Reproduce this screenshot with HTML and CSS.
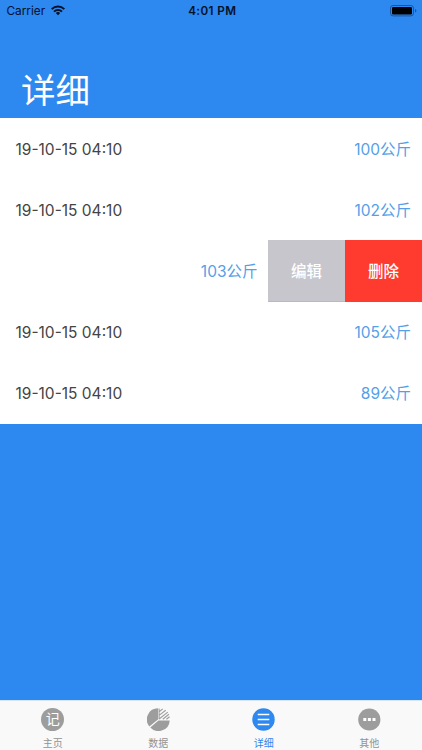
FILE: index.html
```html
<!DOCTYPE html>
<html lang="zh-CN">
<head>
<meta charset="utf-8">
<title>详细</title>
<link rel="stylesheet" href="styles.css">
</head>
<body>
<div class="app">
  <header class="header">
    <div class="status">
      <div class="carrier"><span>Carrier</span>
        <svg class="wifi" width="14" height="10.5" viewBox="0 0 14 10.5"><g fill="none" stroke="#04112b" stroke-width="2"><path d="M.7 4.1a9 9 0 0 1 12.6 0"/><path d="M3 6.6a5.7 5.7 0 0 1 8 0"/></g><path fill="#04112b" d="M4.8 8.1a3.2 3.2 0 0 1 4.4 0L7 10.3z"/></svg>
      </div>
      <div class="time">4:01 PM</div>
      <svg class="battery" width="27" height="12" viewBox="0 0 27 12"><rect x=".5" y=".5" width="23" height="10.4" rx="2.6" fill="none" stroke="#1a559d"/><rect x="2" y="2" width="20" height="7.4" rx="1.2"/><path d="M25 4v3.6q1.4-.5 1.4-1.8T25 4z" fill="#1a559d"/></svg>
    </div>
    <h1 class="title">详细</h1>
  </header>
  <main class="list">
    <div class="row"><span class="date">19-10-15 04:10</span><span class="weight">100公斤</span></div>
    <div class="row"><span class="date">19-10-15 04:10</span><span class="weight">102公斤</span></div>
    <div class="row swiped"><span class="weight">103公斤</span><button class="action edit">编辑</button><button class="action delete">删除</button></div>
    <div class="row"><span class="date">19-10-15 04:10</span><span class="weight">105公斤</span></div>
    <div class="row"><span class="date">19-10-15 04:10</span><span class="weight">89公斤</span></div>
  </main>
  <nav class="tabs">
    <a class="tab"><span class="note">记</span><span class="label">主页</span></a>
    <a class="tab"><svg class="icon" viewBox="0 0 23 23"><path fill="#9d9d9d" d="M11 .3v11.2L2.3 18.5A11.2 11.2 0 0 1 11 .3zM11.5 12.4H22.7A11.2 11.2 0 0 1 3.3 19.4z"/><path fill="none" stroke="#9d9d9d" stroke-width="1.1" d="M12.1 3.8l3.7-2.9M12.1 7.4l6.6-5.2M12.1 11l8.7-6.9M15.8 11.2l6.1-4.9M19.4 11.2l3.2-2.5M12.1 .6v10.6"/></svg><span class="label">数据</span></a>
    <a class="tab active"><svg class="icon" viewBox="0 0 23 23"><circle cx="11.5" cy="11.5" r="11.2" fill="#2d88ef"/><path d="M5.7 6.5h11.6M5.7 11.5h11.6M5.7 16.5h11.6" stroke="#fff" stroke-width="1.3"/></svg><span class="label">详细</span></a>
    <a class="tab"><svg class="icon" viewBox="0 0 23 23"><circle cx="11.3" cy="11.5" r="11.1" fill="#9d9d9d"/><path fill="#fff" d="M5.3 10h3v3h-3zM9.9 10h3v3h-3zM14.5 10h3v3h-3z"/></svg><span class="label">其他</span></a>
  </nav>
</div>
</body>
</html>
```
FILE: styles.css
```css
* { box-sizing: border-box; }
body { margin: 0; font-family: Inter, "Noto Sans CJK SC", sans-serif; }
.app { display: flex; flex-direction: column; width: 422px; height: 750px; background: #2d88ef; overflow: hidden; }
.header { height: 118.3px; flex: none; }
.status { display: grid; grid-template-columns: 1fr auto 1fr; align-items: center; height: 22px; padding: 0 5px 0 6.5px; color: #04112b; }
.carrier { display: flex; align-items: center; gap: 6px; font-size: 11.8px; line-height: 14px; margin-top: -1px; }
.wifi { display: block; }
.time { padding-left: 1px; font-size: 11.7px; font-weight: 600; letter-spacing: .4px; }
.battery { justify-self: end; }
.title { margin: 44px 0 0 21px; color: #fff; font-size: 34.5px; line-height: 50px; font-weight: 400; }
.list { flex: none; background: #fff; }
.row { display: flex; align-items: center; justify-content: space-between; height: 61.1px; padding: 0 11px 0 15.5px; font-size: 15.5px; }
.date { padding-top: .6px; color: #444; }
.weight { padding-bottom: 2px; color: #559fe8; }
.swiped { justify-content: flex-end; padding: 0; }
.swiped .weight { margin-right: 10.5px; }
.action { width: 77px; height: 100%; padding: 0 0 2px; border: 0; border-bottom: 1px solid #a9bddb; color: #fff; font: 500 15.5px Inter, "Noto Sans CJK SC", sans-serif; }
.edit { background: #c7c6cd; }
.delete { background: #ff3b30; border-bottom-color: #ed4148; }
.tabs { display: flex; height: 50.5px; margin-top: auto; background: #f9f9f9; border-top: 1px solid #d7e6f7; }
.tab { flex: 1; display: flex; flex-direction: column; align-items: center; padding-top: 7px; color: #929292; }
.icon, .note { display: block; flex: none; width: 23px; height: 23px; }
.note { border-radius: 50%; background: #9d9d9d; color: #fff; font-size: 14px; line-height: 22px; text-align: center; }
.label { flex: none; margin-top: 5px; font-size: 10px; line-height: 15px; }
.active { color: #2d88ef; }
```
